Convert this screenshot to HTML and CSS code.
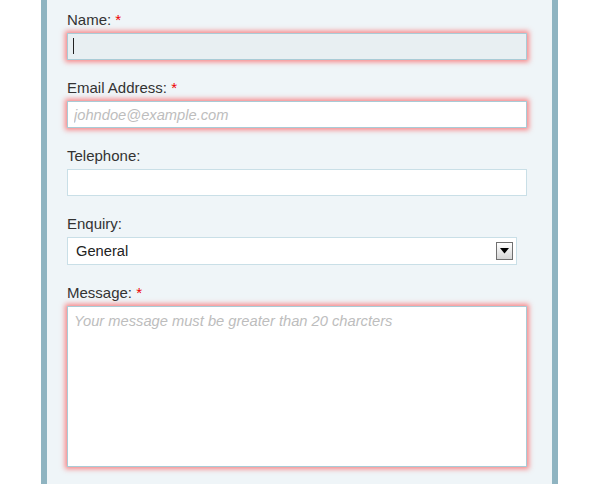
FILE: index.html
```html
<!DOCTYPE html>
<html>
<head>
<meta charset="utf-8">
<link rel="stylesheet" href="styles.css">
</head>
<body>
<form class="panel">
  <div class="field">
    <label class="label">Name: <span class="req">*</span></label>
    <div class="wrap">
      <input class="input invalid focused" type="text">
      <span class="caret"></span>
    </div>
  </div>
  <div class="field">
    <label class="label">Email Address: <span class="req">*</span></label>
    <input class="input invalid" type="text" placeholder="johndoe@example.com">
  </div>
  <div class="field">
    <label class="label">Telephone:</label>
    <input class="input" type="text">
  </div>
  <div class="field">
    <label class="label">Enquiry:</label>
    <div class="wrap select-wrap">
      <select class="select"><option>General</option></select>
      <span class="drop">
        <svg width="9" height="6" viewBox="0 0 9 6"><path d="M0 0h9L4.5 5.5z" fill="#000"/></svg>
      </span>
    </div>
  </div>
  <div class="field">
    <label class="label">Message: <span class="req">*</span></label>
    <textarea class="input area invalid" placeholder="Your message must be greater than 20 charcters"></textarea>
  </div>
</form>
</body>
</html>
```
FILE: styles.css
```css
html, body {
  margin: 0;
  padding: 0;
  background: #ffffff;
}
body {
  font-family: "Liberation Sans", Arial, sans-serif;
  font-size: 14px;
  color: #333333;
}
.panel {
  margin: 0 0 0 41px;
  width: 517px;
  height: 484px;
  box-sizing: border-box;
  border-left: 6px solid #8fb4c1;
  border-right: 6px solid #8fb4c1;
  background: #eff5f8;
  padding: 11px 0 0 20px;
  display: flex;
  flex-direction: column;
  gap: 19px;
}
.field {
  display: flex;
  flex-direction: column;
  align-items: flex-start;
}
.label {
  display: block;
  font-size: 15px;
  line-height: 17px;
  height: 16px;
  margin-bottom: 6px;
  color: #333333;
}
.req {
  color: #ee0000;
}
.wrap {
  position: relative;
}
.input {
  display: block;
  box-sizing: border-box;
  width: 460px;
  height: 27px;
  margin: 0;
  padding: 4px 6px;
  border: 1px solid #c9dfe7;
  background: #ffffff;
  font-family: "Liberation Sans", Arial, sans-serif;
  font-size: 14.7px;
  color: #333;
  outline: none;
}
.input::placeholder {
  color: #bdbdbd;
  font-style: italic;
}
.invalid {
  border-color: #a9cbd6;
  box-shadow: 0 0 5px 2px rgba(255, 60, 60, 0.6);
}
.focused {
  background: #e8eff2;
}
.caret {
  position: absolute;
  left: 6px;
  top: 5px;
  width: 1px;
  height: 16px;
  background: #222;
}
.select-wrap {
  width: 450px;
}
.select {
  display: block;
  box-sizing: border-box;
  width: 450px;
  height: 28px;
  margin: 0;
  padding: 0 0 0 8px;
  border: 1px solid #c9dfe7;
  border-radius: 0;
  background: #ffffff;
  -webkit-appearance: none;
  appearance: none;
  font-family: "Liberation Sans", Arial, sans-serif;
  font-size: 14.7px;
  color: #222;
  outline: none;
}
.drop {
  position: absolute;
  right: 4px;
  top: 5px;
  width: 17px;
  height: 18px;
  box-sizing: border-box;
  border: 1px solid #707070;
  background: linear-gradient(#ffffff, #d6d6d6);
  display: flex;
  align-items: center;
  justify-content: center;
}
.area {
  height: 161px;
  resize: none;
  padding: 6px 6px;
  overflow: hidden;
}
```
